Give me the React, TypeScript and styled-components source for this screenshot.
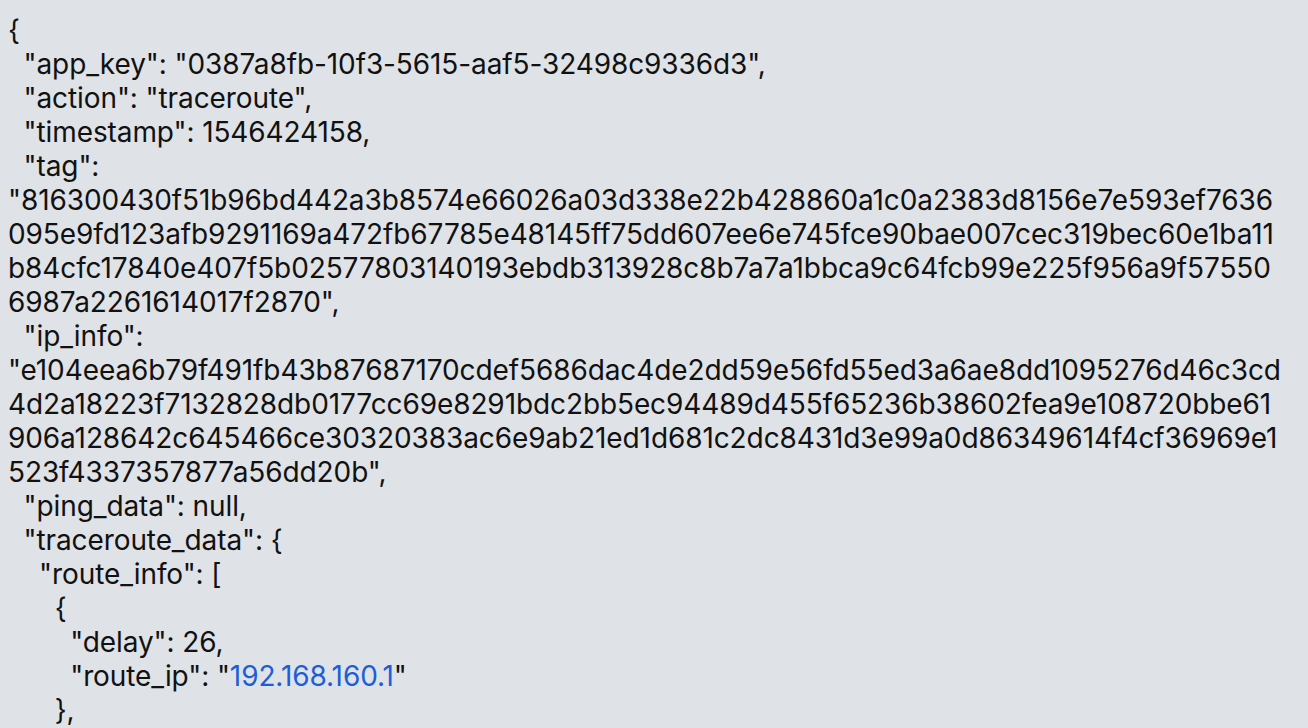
import React from "react";
import styled, { createGlobalStyle } from "styled-components";

const Global = createGlobalStyle`
  html, body {
    margin: 0;
    padding: 0;
    background: #dfe2e7;
  }
  body {
    padding: 13px 8px 8px 8px;
    box-sizing: border-box;
    min-height: 728px;
  }
`;

const Pre = styled.pre`
  margin: 0;
  font-family: Inter, "Noto Sans", "Liberation Sans", sans-serif;
  font-size: 28px;
  letter-spacing: -0.1px;
  line-height: 34px;
  color: #111;
  white-space: pre;
`;

const Line = styled.div`
  height: 34px;
`;

const Link = styled.span`
  color: #1d5ed8;
`;

type Seg = string | { link: string };

const lines: Seg[][] = [
  ["{"],
  ['  "app_key": "0387a8fb-10f3-5615-aaf5-32498c9336d3",'],
  ['  "action": "traceroute",'],
  ['  "timestamp": 1546424158,'],
  ['  "tag":'],
  ['"816300430f51b96bd442a3b8574e66026a03d338e22b428860a1c0a2383d8156e7e593ef7636'],
  ["095e9fd123afb9291169a472fb67785e48145ff75dd607ee6e745fce90bae007cec319bec60e1ba11"],
  ["b84cfc17840e407f5b02577803140193ebdb313928c8b7a7a1bbca9c64fcb99e225f956a9f57550"],
  ['6987a2261614017f2870",'],
  ['  "ip_info":'],
  ['"e104eea6b79f491fb43b87687170cdef5686dac4de2dd59e56fd55ed3a6ae8dd1095276d46c3cd'],
  ["4d2a18223f7132828db0177cc69e8291bdc2bb5ec94489d455f65236b38602fea9e108720bbe61"],
  ["906a128642c645466ce30320383ac6e9ab21ed1d681c2dc8431d3e99a0d86349614f4cf36969e1"],
  ['523f4337357877a56dd20b",'],
  ['  "ping_data": null,'],
  ['  "traceroute_data": {'],
  ['    "route_info": ['],
  ["      {"],
  ['        "delay": 26,'],
  ['        "route_ip": "', { link: "192.168.160.1" }, '"'],
  ["      },"],
];

export default function App() {
  return (
    <>
      <Global />
      <Pre>
        {lines.map((segs, i) => (
          <Line key={i}>
            {segs.map((s, j) =>
              typeof s === "string" ? (
                <React.Fragment key={j}>{s}</React.Fragment>
              ) : (
                <Link key={j}>{s.link}</Link>
              )
            )}
          </Line>
        ))}
      </Pre>
    </>
  );
}
